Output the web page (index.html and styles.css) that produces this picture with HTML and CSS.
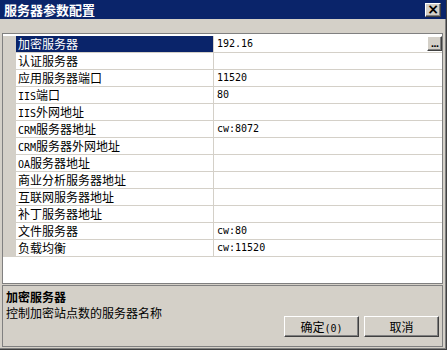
FILE: index.html
```
<!DOCTYPE html>
<html>
<head>
    <meta charset="utf-8">
    <title>服务器参数配置</title>
    <link rel="stylesheet" href="styles.css">
</head>
<body>
    <div class="window">
        <div class="titlebar">
            <span class="title">服务器参数配置</span>
            <span class="close">×</span>
        </div>
        <div class="toolbar"></div>
        <div class="grid">
            <div class="rows">
                <div class="row selected">
                    <div class="name">加密服务器</div>
                    <div class="value"><span class="en">192.16</span><span class="dots">...</span></div>
                </div>
                <div class="row"><div class="name">认证服务器</div><div class="value"></div></div>
                <div class="row"><div class="name">应用服务器端口</div><div class="value"><span class="en">11520</span></div></div>
                <div class="row"><div class="name"><span class="en">IIS</span>端口</div><div class="value"><span class="en">80</span></div></div>
                <div class="row"><div class="name"><span class="en">IIS</span>外网地址</div><div class="value"></div></div>
                <div class="row"><div class="name"><span class="en">CRM</span>服务器地址</div><div class="value"><span class="en">cw:8072</span></div></div>
                <div class="row"><div class="name"><span class="en">CRM</span>服务器外网地址</div><div class="value"></div></div>
                <div class="row"><div class="name"><span class="en">OA</span>服务器地址</div><div class="value"></div></div>
                <div class="row"><div class="name">商业分析服务器地址</div><div class="value"></div></div>
                <div class="row"><div class="name">互联网服务器地址</div><div class="value"></div></div>
                <div class="row"><div class="name">补丁服务器地址</div><div class="value"></div></div>
                <div class="row"><div class="name">文件服务器</div><div class="value"><span class="en">cw:80</span></div></div>
                <div class="row"><div class="name">负载均衡</div><div class="value"><span class="en">cw:11520</span></div></div>
            </div>
        </div>
        <div class="desc">
            <div class="desc-text">
                <div class="desc-title">加密服务器</div>
                <div>控制加密站点数的服务器名称</div>
            </div>
            <div class="buttons">
                <span class="btn">确定<span class="en">(0)</span></span>
                <span class="btn">取消</span>
            </div>
        </div>
    </div>
</body>
</html>
```

FILE: styles.css
```
body {
    margin: 0;
    background: #d4d0c8;
}

.window {
    box-sizing: border-box;
    width: 447px;
    height: 350px;
    background: #d4d0c8;
    border-right: 1px solid #404040;
    border-bottom: 1px solid #404040;
    box-shadow: inset -1px -1px 0 #808080;
    font-family: "Noto Sans CJK SC", "Liberation Sans", sans-serif;
    font-size: 12px;
    color: #000;
    display: flex;
    flex-direction: column;
}

.en {
    font-family: "DejaVu Sans Mono", "Liberation Mono", monospace;
    font-size: 10px;
}

.titlebar {
    height: 19px;
    background: #0a246a;
    display: flex;
    align-items: center;
    justify-content: space-between;
    padding: 0 5px 0 4px;
    flex-shrink: 0;
}

.title {
    color: #fff;
    font-weight: bold;
    font-size: 13px;
    line-height: 19px;
}

.close {
    box-sizing: border-box;
    width: 16px;
    height: 14px;
    margin-top: 1px;
    background: #d4d0c8;
    border-top: 1px solid #fff;
    border-left: 1px solid #fff;
    border-right: 1px solid #404040;
    border-bottom: 1px solid #404040;
    box-shadow: inset -1px -1px 0 #808080;
    font-family: "DejaVu Sans", sans-serif;
    font-weight: bold;
    font-size: 14px;
    line-height: 11px;
    text-align: center;
}

.toolbar {
    height: 14px;
    flex-shrink: 0;
}

.grid {
    box-sizing: border-box;
    margin-left: 2px;
    width: 441px;
    height: 251px;
    border: 1px solid #808080;
    background: #fff;
    padding-top: 2px;
    flex-shrink: 0;
}

.rows {
    border-left: 13px solid #d4d0c8;
}

.row {
    display: flex;
    height: 17px;
}

.name {
    box-sizing: border-box;
    width: 198px;
    height: 17px;
    padding-left: 2px;
    line-height: 16px;
    border-right: 1px solid #d4d0c8;
    border-bottom: 1px solid #d4d0c8;
    white-space: nowrap;
}

.value {
    box-sizing: border-box;
    flex: 1;
    height: 17px;
    padding-left: 3px;
    line-height: 16px;
    border-bottom: 1px solid #d4d0c8;
    display: flex;
    align-items: center;
}

.selected .name {
    background: #0a246a;
    color: #fff;
}

.dots {
    box-sizing: border-box;
    margin-left: auto;
    width: 15px;
    height: 15px;
    background: #d4d0c8;
    border-top: 1px solid #fff;
    border-left: 1px solid #fff;
    border-right: 1px solid #404040;
    border-bottom: 1px solid #404040;
    box-shadow: inset -1px -1px 0 #808080;
    font-family: "DejaVu Sans", sans-serif;
    font-size: 9px;
    font-weight: bold;
    line-height: 14px;
    text-align: center;
    letter-spacing: -1px;
    color: #000;
    align-self: flex-start;
}

.desc {
    box-sizing: border-box;
    margin: 1px 0 0 2px;
    width: 441px;
    height: 62px;
    border: 1px solid #808080;
    padding: 3px 0 0 3px;
    display: flex;
    flex-direction: column;
    flex-shrink: 0;
}

.desc-text {
    line-height: 16px;
}

.desc-title {
    font-weight: bold;
}

.buttons {
    display: flex;
    justify-content: flex-end;
    gap: 5px;
    padding-right: 3px;
    margin-top: -5px;
}

.btn {
    box-sizing: border-box;
    width: 75px;
    height: 21px;
    background: #d4d0c8;
    border-top: 1px solid #fff;
    border-left: 1px solid #fff;
    border-right: 1px solid #404040;
    border-bottom: 1px solid #404040;
    box-shadow: inset -1px -1px 0 #808080;
    text-align: center;
    line-height: 19px;
}
```
